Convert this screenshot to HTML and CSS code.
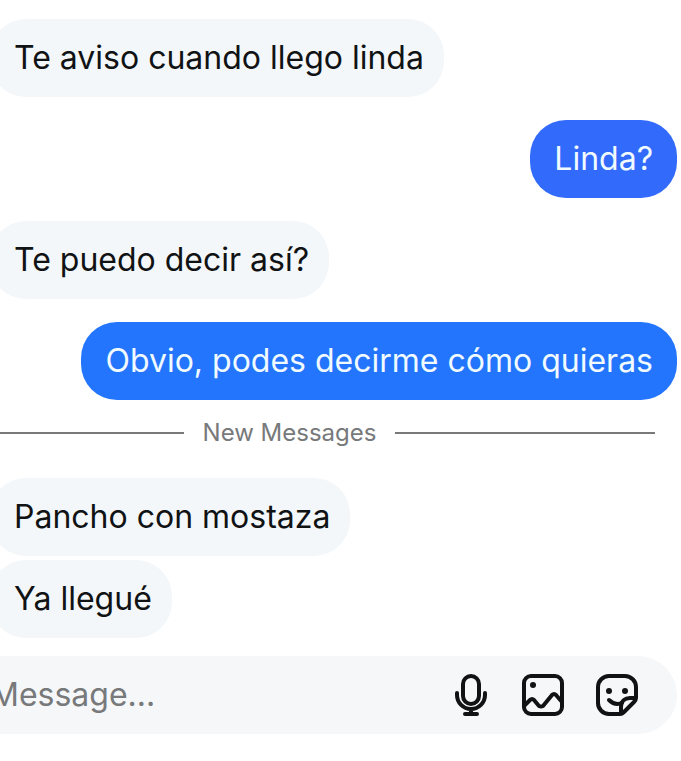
FILE: index.html
```html
<!DOCTYPE html>
<html lang="es">
<head>
    <meta charset="UTF-8">
    <meta name="viewport" content="width=device-width, initial-scale=1.0">
    <title>Chat</title>
    <link rel="stylesheet" href="styles.css">
</head>
<body>
    <main class="chat">
        <p class="bubble received">Te aviso cuando llego linda</p>
        <p class="bubble sent violet">Linda?</p>
        <p class="bubble received">Te puedo decir así?</p>
        <p class="bubble sent">Obvio, podes decirme cómo quieras</p>

        <div class="divider"><span>New Messages</span></div>

        <div class="group">
            <p class="bubble received">Pancho con mostaza</p>
            <p class="bubble received">Ya llegué</p>
        </div>
    </main>

    <form class="composer">
        <input type="text" name="message" placeholder="Message..." aria-label="Message">
        <button type="button" aria-label="Voice message">
            <svg viewBox="0 0 44 44" fill="none" stroke="#101214" stroke-width="4" stroke-linecap="round" stroke-linejoin="round">
                <rect x="16" y="3" width="16" height="28" rx="8"/>
                <path d="M10 20v2a14 14 0 0 0 28 0v-2M24 36v5M18 41h12"/>
            </svg>
        </button>
        <button type="button" aria-label="Photo">
            <svg viewBox="0 0 44 44" fill="none" stroke="#101214" stroke-width="4" stroke-linecap="round" stroke-linejoin="round">
                <rect x="3" y="3" width="38" height="38" rx="7"/>
                <circle cx="12" cy="12" r="3" fill="#101214" stroke="none"/>
                <path d="M3 33l6-6q2-2 4 0l5 6q2 1 4 0l9-11q2-2 4 0l6 7"/>
            </svg>
        </button>
        <button type="button" aria-label="Sticker">
            <svg viewBox="0 0 44 44" fill="none" stroke="#101214" stroke-width="4" stroke-linecap="round" stroke-linejoin="round">
                <path d="M25 41H14A11 11 0 0 1 3 30V14A11 11 0 0 1 14 3h16a11 11 0 0 1 11 11v11c0 2-1 3-2 4L29 39c-1 1-2 2-4 2z"/>
                <path d="M26 40v-6c0-6 4-9 9-9h5"/>
                <path d="M14 27c4 4 8 5 13 3"/>
                <circle cx="14" cy="18" r="3" fill="#101214" stroke="none"/>
                <circle cx="30" cy="18" r="3" fill="#101214" stroke="none"/>
            </svg>
        </button>
    </form>
</body>
</html>
```

FILE: styles.css
```css
* {
    box-sizing: border-box;
}

body {
    margin: 0;
    background: #fff;
    color: #101214;
    font-family: Inter, "Liberation Sans", sans-serif;
    font-size: 32px;
    line-height: 38px;
    overflow-x: hidden;
}

.chat {
    display: flex;
    flex-direction: column;
    gap: 23px;
    padding: 19px 4px 18px 0;
}

.bubble {
    margin: 0;
    padding: 20px 24px;
    border-radius: 36px;
}

.received {
    align-self: flex-start;
    margin-left: -10px;
    padding-right: 20px;
    background: #f3f7f9;
}

.sent {
    align-self: flex-end;
    background: #2275fc;
    color: #f0faff;
}

.violet {
    background: #326afb;
}

.divider {
    display: flex;
    align-items: center;
    gap: 19px;
    margin: -4px 22px 8px -76px;
    color: #77797b;
    font-size: 24px;
    line-height: 28px;
}

.divider::before,
.divider::after {
    content: "";
    flex: 1;
    height: 2px;
    background: #77797b;
}

.group {
    display: flex;
    flex-direction: column;
    gap: 4px;
}

.composer {
    display: flex;
    align-items: center;
    gap: 30px;
    margin: 0 4px 0 -10px;
    padding: 17px 38px 17px 0;
    border-radius: 0 39px 39px 0;
    background: #f5f7f8;
}

.composer input {
    flex: 1;
    min-width: 0;
    padding: 0;
    border: none;
    outline: none;
    background: none;
    color: inherit;
    font: inherit;
}

.composer input::placeholder {
    color: #77797b;
    opacity: 1;
}

.composer button {
    width: 44px;
    height: 44px;
    padding: 0;
    border: none;
    background: none;
    cursor: pointer;
}

.composer svg {
    display: block;
}
```
